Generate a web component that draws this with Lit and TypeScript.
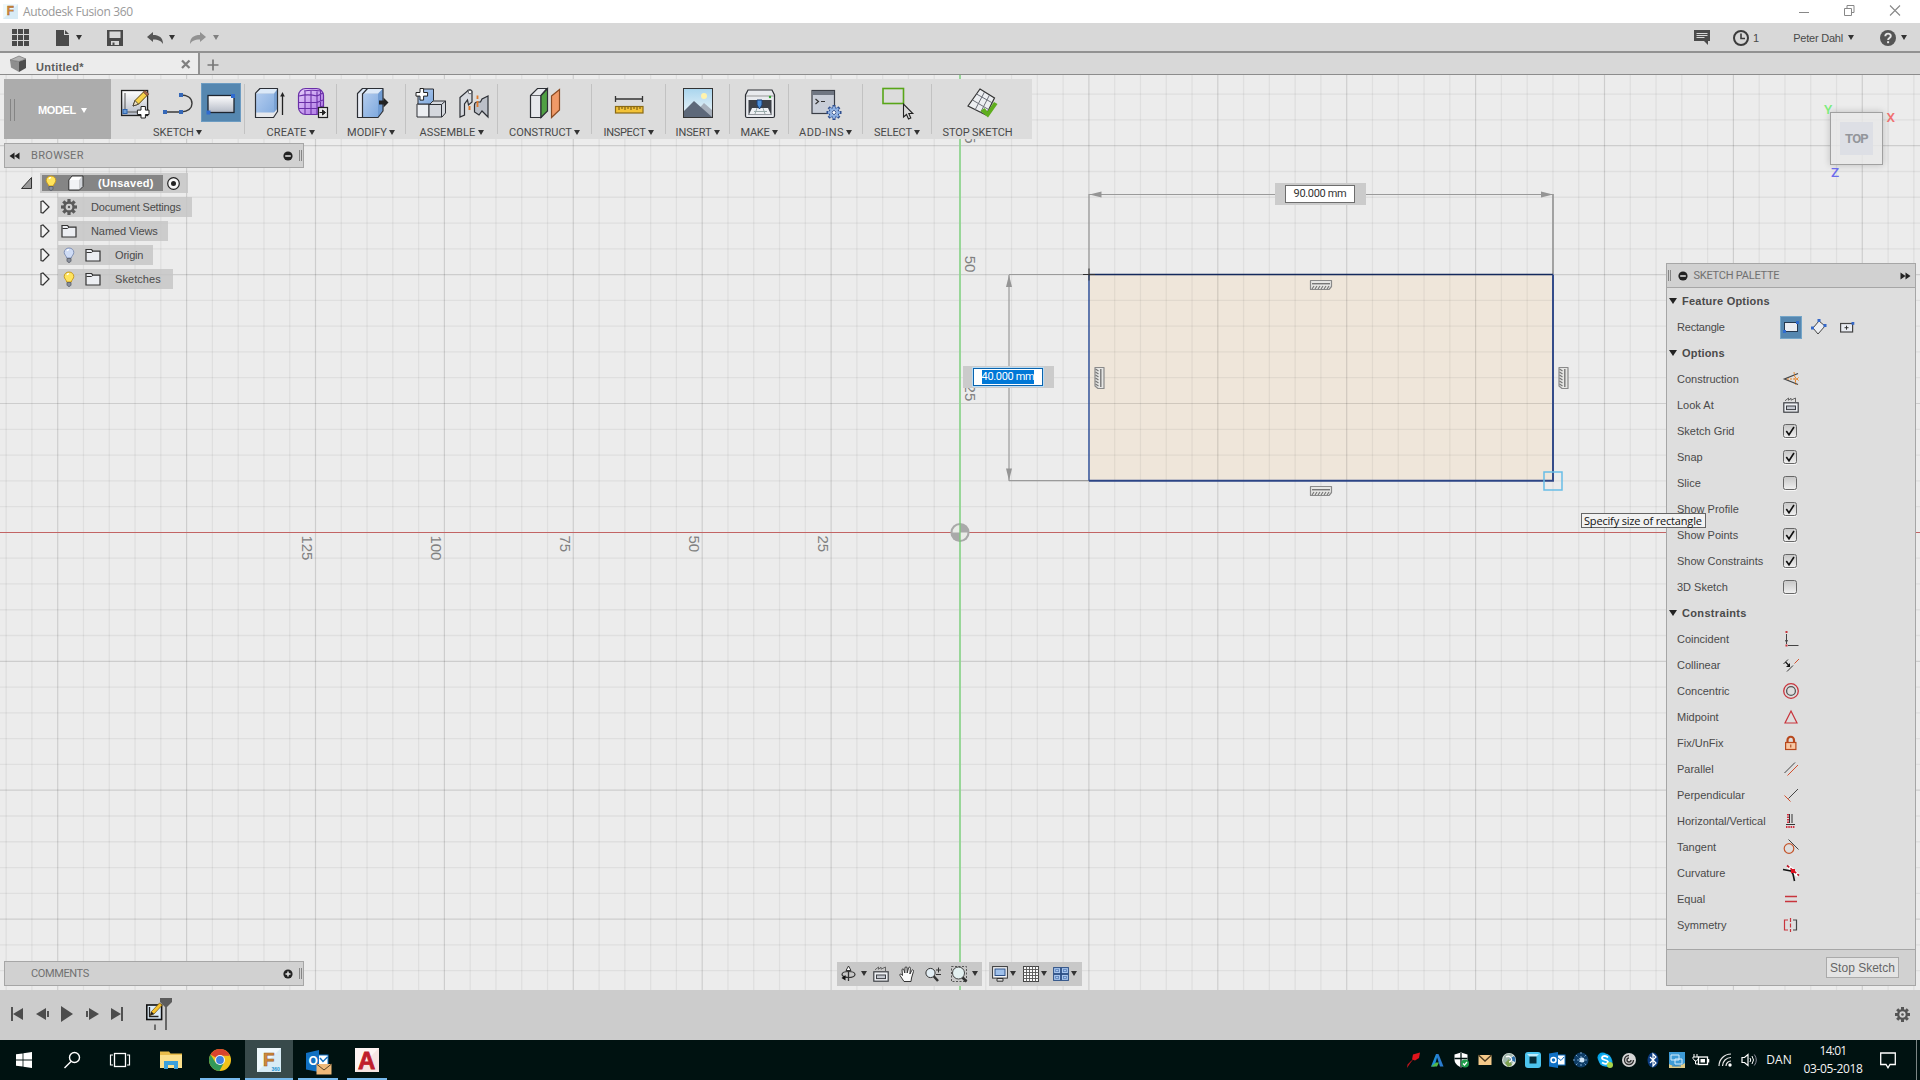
import { LitElement, html, svg, css, nothing } from "lit";
import { customElement } from "lit/decorators.js";

const icon = (w: number, h: number, body: unknown, cls = "") =>
  html`<svg class=${cls} width=${w} height=${h} viewBox="0 0 ${w} ${h}">${body}</svg>`;

const caret = (cls = "") => html`<i class="caret ${cls}"></i>`;
const fit = (text: string, w: number, cls = "") => html`<span class="fit ${cls}" data-w=${w}>${text}</span>`;

/* ---------- shared glyphs ---------- */
const K = "#3c3f44";
const gears = (cx: number, cy: number, r: number, fill: string, hole: string) => svg`
  <circle cx=${cx} cy=${cy} r=${r * 0.72} fill=${fill}></circle>
  ${[0, 45, 90, 135].map((a) => svg`<rect x=${cx - r * 0.2} y=${cy - r} width=${r * 0.4} height=${r * 2} fill=${fill} transform="rotate(${a} ${cx} ${cy})"></rect>`)}
  <circle cx=${cx} cy=${cy} r=${r * 0.42} fill=${hole}></circle>`;

const bulb = (on: boolean) => icon(12, 16, svg`
  <path d="M6 1C3.2 1 1.2 3 1.2 5.4 1.2 7.8 3.3 8.6 3.7 11h4.6c.4-2.4 2.5-3.2 2.5-5.6C10.8 3 8.8 1 6 1z"
    fill=${on ? "#ffe45c" : "#cfdcf5"} stroke=${on ? "#c79a22" : "#8191b5"}></path>
  <path d="M4 3.8C4.5 3 5.2 2.7 6 2.7" stroke="#fff" fill="none" stroke-width="1.3"/>
  <path d="M4 11.5h4v2.6l-1 1.2H5l-1-1.2z" fill="#8a909c" stroke="#555b66" stroke-width=".8"/>`);

const folder = icon(16, 14, svg`
  <path d="M1 3V1.5h5.5L8 3.2h7V13H1z" fill="#eceef2" stroke="#333" stroke-width="1.2"/>
  <path d="M1.5 4.5h5l1.5-1.3" stroke="#333" fill="none"/>`);

const lookAt = icon(16, 16, svg`
  <rect x=".8" y="5.8" width="14.4" height="9.4" fill="#eef0f4" stroke=${K} stroke-width="1.2"/>
  <rect x="3.5" y="9" width="9" height="3.6" fill="#c4c8d0" stroke="#3c3f44"/>
  <path d="M2 3.8L5.5 1v2.3L8 1.2v2L12.5 1v4" fill="none" stroke="#666"/>`);

const cube = icon(16, 16, svg`
  <path d="M4 1h11l-3.5 4H.8z" fill="#fff"/><path d="M15 1v10.5L11.5 15V5z" fill="#d0d3d8"/>
  <path d="M.8 5h10.7v10H.8z" fill="#f2f3f5"/>
  <path d="M4 1h11v10.5L11.5 15H.8V5z" fill="none" stroke="#333"/>`);

/* ---------- ribbon icons (32 x 32) ---------- */
const defs = svg`<defs>
  <linearGradient id="g" x1="0" y1="0" x2="0" y2="1"><stop offset="0" stop-color="#fff"/><stop offset="1" stop-color="#b4bac6"/></linearGradient>
  <linearGradient id="b" x1="0" y1="0" x2="1" y2="1"><stop offset="0" stop-color="#b4cdef"/><stop offset="1" stop-color="#7fa9de"/></linearGradient>
  <linearGradient id="p" x1="0" y1="0" x2="1" y2="1"><stop offset="0" stop-color="#e6cffb"/><stop offset="1" stop-color="#ab72e4"/></linearGradient>
  <linearGradient id="s" x1="0" y1="0" x2="0" y2="1"><stop offset="0" stop-color="#a9d5ee"/><stop offset="1" stop-color="#f2f8fa"/></linearGradient>
</defs>`;
const D = "#2c2f35";
const rib: Record<string, unknown> = {
  sketch: svg`<rect x="2.6" y="3.5" width="26" height="25" fill="url(#g)" stroke="#222" stroke-width="1.3"/>
    <path d="M6 6v19h17" stroke="#555" fill="none"/><rect x="4" y="22.5" width="4" height="4" fill="#6c9ed6" stroke="#2f65b0"/>
    <path d="M14 19l2-5.5L25.5 4l3.6 3.4-9.6 9.8z" fill="#f7d24a" stroke="#5a4310"/><path d="M14 19l2-5.5 3.5 3.7z" fill="#efe0c0" stroke="#333" stroke-width=".8"/><path d="M24.4 5.2L26 3.6l3.7 3.3-1.7 1.8z" fill="#b06a52" stroke="#5a3a20" stroke-width=".7"/>
    <path d="M22 19.5h4.4v3.6H30v4.4h-3.6V31H22v-3.5h-3.6v-4.4H22z" fill="#fff" stroke="#222"/>`,
  line: svg`<path d="M3 25h16M19 8c5 0 11 2 11 8.5S24 24.5 19 25" fill="none" stroke="#3a3a3a" stroke-width="1.4"/>
    <rect x="1" y="23" width="4" height="4" fill="#3568b8"/><rect x="17" y="23" width="4" height="4" fill="#3568b8"/><rect x="17" y="6" width="4" height="4" fill="#3568b8"/>`,
  rect: svg`<rect x="3" y="8.5" width="26" height="17" fill="url(#g)" stroke="#1d2530" stroke-width="1.3"/>
    <rect x="26" y="7" width="4" height="4" fill="#2f6bd0"/><rect x="1.5" y="23.5" width="4" height="4" fill="#2f6bd0"/>`,
  extrude: svg`<path d="M6 1.5h18l-4 5H2z" fill="#dce9f8"/><path d="M24 1.5v23l-4 6v-24z" fill="#7aa2d4"/><path d="M1.5 6.5h18.5v24H1.5z" fill="url(#b)"/>
    <path d="M1.5 25.5h18.5l4-4.5v4l-4 6H1.5z" fill="#e6e8ec"/>
    <path d="M6 1.5h17.5V24.5l-4 6h-18V6.2z" fill="none" stroke=${D} stroke-width="1.2" stroke-linejoin="round"/>
    <path d="M28.5 28V8" stroke="#222" stroke-width="1.3"/><path d="M28.5 5l2.3 4.5h-4.6z" fill="#222"/>`,
  form: svg`<rect x="1.5" y="1.5" width="25" height="26" rx="7" fill="url(#p)" stroke="#6a2fa8" stroke-width="1.2"/>
    <path d="M2 9c6-1.5 12-1.5 18 0M2 15.5h18M2 21.5h18M8 3.5V27M14 3.5V27M20 3v24M23.5 3v22M20 9l6-3M20 15.5l6-2.5M20 21.5l6-2.5M7 4c5-1 11-1 17 0" fill="none" stroke="#6a2fa8" stroke-width="1.1"/>
    <rect x="21.5" y="20.5" width="9" height="10" fill="#e8e8e8" stroke="#222" stroke-width="1.2"/><path d="M22.5 25.5h4M25.5 23l3 2.5-3 2.5z" stroke="#222" fill="#222"/>`,
  modify: svg`<path d="M7 1.5h20l-4 5H2z" fill="#dce9f8"/><path d="M27 1.5v22l-5 7v-24z" fill="#6f9bd2"/><path d="M1.5 6.5h5v24h-5z" fill="#e9edf4"/><path d="M6.5 6.5H22v24H6.5z" fill="url(#b)"/>
    <path d="M6.5 1.5H27V24l-5 6.5H1.5V6.5zM6.5 30V7l5-5.5" fill="none" stroke=${D} stroke-width="1.2" stroke-linejoin="round"/>
    <path d="M23 13.5h4.5v-3l5 5-5 5v-3H23z" fill="#222"/>`,
  component: svg`<path d="M2 17h12v13H2z" fill="#eceef2" stroke="#2c2f35"/><path d="M14 17l3-3h13.5v12L27 30H14z" fill="#d4d7dd" stroke="#2c2f35"/><path d="M14 17.5h12.5V30M26.5 17.5l4-3.5" stroke="#2c2f35" fill="none"/>
    <path d="M3 8l5-6h10.5v11.5L15 17H3z" fill="url(#b)" stroke="#2c2f35"/>
    <path d="M5 1.5h3.6v4h4v3.6h-4v4H5v-4H1V5.5h4z" fill="#fff" stroke="#222"/>`,
  joint: svg`<path d="M2 10.5l7-6c1-2.5 6-2.5 5 1.5v9l-3.5 3-1-5L6.5 17v11L2 30z" fill="#d6d9df" stroke="#2c2f35" stroke-width="1.2"/><circle cx="12" cy="5" r="1.8" fill="#fff" stroke="#2c2f35" stroke-width=".7"/><path d="M11.5 19v4" stroke="#e07a2c" stroke-width="2"/>
    <path d="M30 9l-6 3-1.5 3h-3c-2 0-3 1.5-3 3v7l4.5 3 3-4 6 6z" fill="#bcc0c8" stroke="#2c2f35" stroke-width="1.2"/><path d="M19.5 12V8.5M19.5 20v-6" stroke="#e07a2c" stroke-width="1.8"/>`,
  plane: svg`<path d="M1.5 8.5l7-7h9.5l-6 7v22H1.5z" fill="#e6e8ec" stroke="#2c2f35" stroke-width="1.2"/><path d="M2 8.5h10" stroke="#2c2f35" stroke-width=".7"/><path d="M12 8.5l6.5-7v22.5L12 30.5z" fill="#4fa043" stroke="#2c2f35" stroke-width="1.2"/>
    <path d="M22.5 9l8-6.5V23l-8 7.5z" fill="#f09a68" stroke="#8a4a22" stroke-width="1.2"/>`,
  inspect: svg`<path d="M2.5 12h27M2.5 9v6M29.5 9v6" stroke="#333" stroke-width="1.3" fill="none"/><rect x="2.5" y="19.5" width="27.5" height="6.5" fill="#f3c338" stroke="#8a6a14" stroke-width="1.2"/>
    <path d="M6 20v3M9 20v2M12 20v3M15 20v2M18 20v3M21 20v2M24 20v3M27 20v2" stroke="#6b5010"/>`,
  insert: svg`<rect x="1.5" y="1.5" width="29" height="29" fill="url(#s)" stroke="#333"/><circle cx="22" cy="9" r="3" fill="#fff3ad"/>
    <path d="M14 25l8-9 8 7v7H14z" fill="#a7b0bc"/><path d="M2 24l10-10 18 16H2z" fill="#5d6879"/>`,
  make: svg`<path d="M4 3h24l2.5 5v21a1.5 1.5 0 0 1-1.5 1.5H3A1.5 1.5 0 0 1 1.5 29V8z" fill="#e8eaee" stroke="#2c2f35" stroke-width="1.2"/><path d="M2 9h28" stroke="#999"/>
    <path d="M4.5 13h23v15h-23z" fill="#3d4148"/><path d="M8 21h16l3 6.5H5z" fill="#eef0f3"/><path d="M10 24.5h13M13 21l-2 6M19 21l2 6" stroke="#9aa"/><path d="M13 13h5v5l-2.5 4L13 18z" fill="#4d8fd8" stroke="#1e3f70"/><circle cx="26" cy="10" r="1.2" fill="#2ea52e"/>`,
  addins: svg`<rect x="2" y="3.5" width="22.5" height="23" fill="#c9ced8" stroke="#3a3e46" stroke-width="1.2"/><rect x="2.5" y="4" width="21.5" height="4" fill="#6f7682"/>
    <path d="M5.5 12l3 2.5-3 2.5M11 14.5h4" stroke="#333" fill="none" stroke-width="1.2"/>
    ${gears(24, 25.5, 7.5, "#2f4f8f", "#fff")}${gears(24, 25.5, 6, "#8fb2e4", "#fff")}<circle cx="24" cy="25.5" r="2" fill="#fff" stroke="#2f4f8f"/>`,
  select: svg`<rect x="1" y="1.5" width="20.5" height="15" fill="none" stroke="#58a618" stroke-width="1.6"/>
    <path d="M21.500 17v13l3-2.5 2 4.5 2.3-1-2-4.5h4z" fill="#d9d9d9" stroke="#222" stroke-width="1.1"/>`,
  stop: svg`<path d="M14 2l14.5 9-8.5 17L2 19z" fill="#eceef1" stroke="#333" stroke-width="1.2"/><path d="M10.5 7l16 9M6.5 13l16 9.5M18.5 5l-9.5 18M23.5 8l-9 17.5" stroke="#6b6f78" fill="none"/>
    <path d="M14.5 24l4-3 3 3.5 6.5-9.5 3.5 2-9.5 13.5z" fill="#5fae1e"/>`,
};

const GROUPS: Array<[string, number, number, string[], string?]> = [
  ["SKETCH", 134, 40, ["sketch", "line", "rect"], "rect"],
  ["CREATE", 92, 39, ["extrude", "form"]],
  ["MODIFY", 69, 39, ["modify"]],
  ["ASSEMBLE", 92, 55, ["component", "joint"]],
  ["CONSTRUCT", 94, 62, ["plane"]],
  ["INSPECT", 74, 41, ["inspect"]],
  ["INSERT", 64, 35, ["insert"]],
  ["MAKE", 59, 28, ["make"]],
  ["ADD-INS", 74, 44, ["addins"]],
  ["SELECT", 69, 37, ["select"]],
  ["STOP SKETCH", 100, 69, ["stop"]],
];

/* ---------- palette icons (16 x 16) ---------- */
const R = "#c8343c";
const pal: Record<string, unknown> = {
  Construction: svg`<path d="M15 2.5L1.5 8 15 13.5" fill="none" stroke="#444" stroke-width="1.3"/><path d="M4 8h12M11 1l2 13M12 6l4 4M12 10l4-4" stroke="#e8862a" stroke-dasharray="2 1" fill="none"/>`,
  Coincident: svg`<path d="M3.5 3v10M5 14.5h10.5" stroke="#444" fill="none"/><path d="M2 9h3l-1.5 3.5z" fill="#444"/><rect x="2.5" y="0" width="2" height="2" fill="#c8343c"/><rect x="2.5" y="13.5" width="2" height="2" fill="#c8343c"/>`,
  Collinear: svg`<path d="M.5 7L5 2.5M4 14.5l6-6" stroke="#333" fill="none"/><path d="M11.5 6.5l4.5-4.5" stroke="#d4502c"/><path d="M2.5 5l3 3" stroke="#111" stroke-width="1.2"/><path d="M7 6v4H3z" fill="#111"/>`,
  Concentric: svg`<circle cx="8" cy="8" r="7.3" fill="none" stroke=${R} stroke-width="1.3"/><circle cx="8" cy="8" r="4.4" fill="none" stroke="#555" stroke-width="1.3"/>`,
  Midpoint: svg`<path d="M8 2l6 12H2z" fill="none" stroke=${R} stroke-width="1.2"/>`,
  "Fix/UnFix": svg`<path d="M4.5 8V5a3.2 3.2 0 0 1 6.5 0v3" fill="none" stroke="#b8481c" stroke-width="2.2"/><rect x="2.6" y="7.5" width="10.3" height="7" fill="#f8c8a4" stroke="#b8481c" stroke-width="1.2"/><path d="M7.8 9.5v3" stroke="#a03c14"/>`,
  Parallel: svg`<path d="M1.5 12L12 1.5" stroke="#444"/><path d="M4.5 14.5L15 4" stroke="#d4502c"/>`,
  Perpendicular: svg`<path d="M5.5 11.5L15 2" stroke="#444"/><path d="M1.5 8.5l6 6" stroke="#d4502c"/>`,
  "Horizontal/Vertical": svg`<path d="M6.500 1v9M9 1v9M3 11.500h9" stroke="#333" fill="none"/><path d="M5 1v9" stroke="#d03040" fill="none" stroke-width="2" stroke-dasharray="1.500 1"/><path d="M3 14h9" stroke="#d03040" fill="none" stroke-width="2" stroke-dasharray="1.500 .8"/>`,
  Tangent: svg`<circle cx="6" cy="9.5" r="4.8" fill="none" stroke="#c4562c" stroke-width="1.2"/><path d="M5.5 .5l10 10" stroke="#444"/>`,
  Curvature: svg`<path d="M5 1.500l5 4M11 7l4.500 3.500" stroke="#fff" stroke-width="4" fill="none"/><path d="M4 .5l12 10" stroke="#c01828" stroke-width="1.7" stroke-dasharray="3 1.5"/><path d="M0 4.500l8 1.500 2 3 1.500 7" stroke="#111" fill="none" stroke-width="1.600"/><rect x="8" y="4" width="4" height="4" fill="#e01020"/>`,
  Equal: svg`<path d="M2 5.5h12M2 10.5h12" stroke=${R} stroke-width="1.3"/>`,
  Symmetry: svg`<path d="M5 3H1.5v10H5" fill="none" stroke=${R} stroke-width="1.2"/><path d="M10 3h3.5v10H10" fill="none" stroke="#444" stroke-width="1.2"/><path d="M7.5 1v14" stroke="#c8343c" stroke-dasharray="4 1.5" stroke-width="1.2"/>`,
};
const OPTIONS: Array<[string, boolean | null]> = [
  ["Construction", null], ["Look At", null], ["Sketch Grid", true], ["Snap", true], ["Slice", false],
  ["Show Profile", true], ["Show Points", true], ["Show Constraints", true], ["3D Sketch", false],
];
const CONSTRAINTS = ["Coincident", "Collinear", "Concentric", "Midpoint", "Fix/UnFix", "Parallel", "Perpendicular",
  "Horizontal/Vertical", "Tangent", "Curvature", "Equal", "Symmetry"];

const toggle = (sign: string) => icon(10, 10, svg`<circle cx="5" cy="5" r="4.6" fill="#222"/><path d=${sign === "+" ? "M2.5 5h5M5 2.5v5" : "M2.2 5h5.6"} stroke="#e4e4e4" stroke-width="1.5"/>`);
const chevrons = (d: string) => icon(11, 8, svg`<path d=${d === "l" ? "M5.5 .5v7L.5 4zM10.5 .5v7L5.5 4z" : "M.5 .5v7L5.5 4zM5.5 .5v7L10.5 4z"} fill="#222"/>`);

/* ---------- drawing canvas ---------- */
const OX = 960, OY = 532.4, STEP = 25.78;
const L = 1089, T = 274.5, RT = 1553, B = 480.8;

const gridLines = () => {
  const out: unknown[] = [];
  for (let i = -37; i <= 37; i++) {
    if (!i) continue;
    const x = OX + i * STEP;
    out.push(svg`<path d="M${x} 75V990" class=${i % 5 ? "minor" : "major"}></path>`);
  }
  for (let i = -17; i <= 17; i++) {
    if (!i) continue;
    const y = OY + i * STEP;
    out.push(svg`<path d="M0 ${y}H1920" class=${i % 5 ? "minor" : "major"}></path>`);
  }
  return out;
};
const hv = (x: number, y: number, rot = 0) => svg`<g transform="translate(${x} ${y}) rotate(${rot})">
  <path d="M-10.5-4.5h21v6l-2.5 3h-18.5z" fill="#e6e6e4" stroke="#8a8a8a" stroke-width="1.2" stroke-linejoin="round"/>
  <path d="M-9-1.3h18" stroke="#777" stroke-width="1.4"/>
  <path d="M-7 1l-2 3M-4 1l-2 3M-1 1l-2 3M2 1l-2 3M5 1l-2 3M8 1l-2 3" stroke="#777" stroke-width="1.2"/></g>`;

const canvas = () => html`<svg class="canvas" width="1920" height="915" viewBox="0 75 1920 915">
  <rect x=${L} y=${T} width=${RT - L} height=${B - T} fill="#efe6da"></rect>
  ${gridLines()}
  <path d="M0 532.5H1920" stroke="#c26464" stroke-width="1.1"/>
  <path d="M960 75V990" stroke="#8fd48f" stroke-width="1.8"/>
  ${[["25", 1], ["50", 2], ["75", 3], ["100", 4], ["125", 5]].map(([t, n]) => svg`
    <text class="scale" transform="translate(${OX - Number(n) * 5 * STEP - 13.5} 535.4) rotate(90)">${t}</text>`)}
  ${[["25", 1], ["50", 2], ["75", 3]].map(([t, n]) => svg`
    <text class="scale" text-anchor="end" transform="translate(965 ${OY - Number(n) * 5 * STEP - 2.2}) rotate(90)">${t}</text>`)}
  <circle cx="960" cy="532.5" r="9.6" fill="#a9a9a9"/>
  <path d="M960 532.5V525a7.5 7.5 0 0 0-7.5 7.5zM960 532.5V540a7.5 7.5 0 0 0 7.5-7.5z" fill="#e9ebe7"/>
  <path d="M960 523V542" stroke="#7cc87c" stroke-width="1.4"/>
  <g stroke="#9a9a9a" fill="none" stroke-width="1.2">
    <path d="M1089 194.5H1553M1089 194V274M1009 274.5H1089M1009 275V481M1009 480.7H1089"/><path d="M1553 194V274" stroke-width="1.8"/></g>
  <path d="M1089.5 194.5l12-3v6zM1553 194.5l-12-3v6zM1009 275l-3 12h6zM1009 480.5l-3-12h6z" fill="#959595"/>
  <path d="M${L} ${T}V${B}" stroke="#2c4f9c" stroke-width="1.4"></path>
  <path d="M${L} ${T}H${RT}" stroke="#14295c" stroke-width="1.4"></path>
  <path d="M${L} ${B}H${RT}V${T}" stroke="#2c4586" stroke-width="1.9" fill="none"></path>
  <path d="M1083 274.5h12M1089 268.5v12" stroke="#333"/>
  ${hv(1321, 285)}${hv(1321, 491)}${hv(1099.5, 378, 90)}${hv(1563.5, 378, 90)}
  <rect x="1544" y="472" width="18" height="18" fill="none" stroke="#68bde6" stroke-width="1.5"/>
</svg>`;

/* ---------- taskbar ---------- */
const tray: unknown[] = [
  svg`<path d="M8 2.500L15 .5 14 6l-4 2.500-3-1z" fill="#e0141c"/><path d="M8.500 7L5 11.500 2 16l.5-3.500L6 9z" fill="#c4141c"/>`,
  svg`<path d="M2 14.500L7 2h2L5.500 14.500z" fill="#1e8ed8"/><path d="M2 14.500l5-4h3l-2 4z" fill="#54b848"/><path d="M7 2h2.500l5 12.500h-3.500z" fill="#2a7cd0"/>`,
  svg`<path d="M8 .5l6.500 2v5c0 4-3 6-6.500 8-3.500-2-6.500-4-6.500-8v-5z" fill="#fff"/><path d="M8 1v14M1.500 6.500h13" stroke="#001312" stroke-width="1.3"/><circle cx="12" cy="11.5" r="4" fill="#1f9b4a"/><path d="M10 11.5l1.500 1.500 2.500-3" stroke="#fff" fill="none" stroke-width="1.2"/>`,
  svg`<rect x="1.5" y="3" width="13" height="10" fill="#f4c98a"/><path d="M1.500 3L8 9l6.500-6" fill="none" stroke="#4b3a20" stroke-width="1.3"/>`,
  svg`<circle cx="8" cy="8" r="7" fill="#dfe7e2"/><path d="M3 4a6 6 0 0 1 9-1l-4 4 4 3-2 4A7 7 0 0 1 2 9z" fill="#9fb6ac"/><path d="M8 7l5-3a6 6 0 0 1 1 6z" fill="#2d6fa8"/><path d="M4 11l4-4 3 6-4 2z" fill="#7da14f"/><path d="M5 5q3-2 5 1t-2 4" stroke="#fff" fill="none" stroke-width="1.3"/>`,
  svg`<rect width="16" height="16" rx="3" fill="#4cc4ee"/><path d="M2 2h12l-3 3H5z" fill="#c0ecfa"/><rect x="4.500" y="4.500" width="7" height="7" fill="#052c38"/>`,
  svg`<rect x="6" y="3" width="10" height="10" fill="#fff" stroke="#1070c4"/><path d="M8 5l4 3.500L15 5" stroke="#1070c4" fill="none"/><path d="M0 1.500L9 0v16L0 14.500z" fill="#1070c4"/><circle cx="4.500" cy="8" r="2.500" fill="none" stroke="#fff" stroke-width="1.500"/>`,
  svg`<circle cx="8" cy="8" r="7.5" fill="#0e3d66"/><path d="M0 8h16M8 0v16M3 3l10 10M3 13L13 3" stroke="#7aa6cc" stroke-dasharray="2 2"/><circle cx="9" cy="8" r="2.5" fill="#cfe6f8"/>`,
  svg`<circle cx="5.500" cy="5.500" r="5" fill="#00a3e8"/><circle cx="10.500" cy="10" r="5" fill="#00a3e8"/><circle cx="8" cy="8" r="6.500" fill="#18aef0"/><path d="M11 5.500C8.500 3 5 4 5 6c0 2.500 6 1.500 6 4 0 2-3.500 2.500-6 .5" fill="none" stroke="#fff" stroke-width="1.800"/><circle cx="13" cy="13" r="3" fill="#a6d44c"/>`,
  svg`<circle cx="8" cy="8" r="7" fill="#d6d6d6"/><path d="M8 3.500a4.500 4.500 0 1 0 4.500 4.500M8 6a2 2 0 1 0 2 2" stroke="#333" fill="none" stroke-width="1.400"/>`,
  svg`<ellipse cx="8" cy="8" rx="5.500" ry="7.500" fill="#0c3c80"/><path d="M5 5l6 6-3 3V2l3 3-6 6" fill="none" stroke="#fff" stroke-width="1.200"/>`,
  svg`<rect width="16" height="16" fill="#3e9bd6"/><path d="M2 3h8v5H2zM6 7h7v5H6z" fill="none" stroke="#d5ecfa"/><path d="M0 12c5 3 10 3 16-1v5H0z" fill="#e0ca86"/><path d="M3 14h9" stroke="#3a80b0"/>`,
  svg`<rect x="5.500" y="5" width="9" height="7.500" fill="none" stroke="#fff" stroke-width="1.300"/><path d="M15.500 7v3.500" stroke="#fff" stroke-width="1.500"/><path d="M7.500 7h4.500v3.500H7.500z" fill="#fff"/><path d="M1 2v3M4 2v3M0 5h5.500v1.500L3.500 9H2L0 6.500zM2.500 9v3h3" stroke="#fff" fill="none"/>`,
  svg`<path d="M2 14A12 12 0 0 1 14 2M5.500 14A8.500 8.500 0 0 1 14 5.500M9 14a5 5 0 0 1 5-5" fill="none" stroke="#e8e8e8" stroke-width="1.200"/><circle cx="13" cy="13" r="1.700" fill="#fff"/>`,
  svg`<path d="M1 5.500h2.500L7 2.500v11L3.500 10.500H1z" fill="none" stroke="#fff" stroke-width="1.200"/><path d="M9 6q1.500 2 0 4M11 4q3 4 0 8" fill="none" stroke="#fff"/><path d="M13.300 2.500q4 5.500 0 11" fill="none" stroke="#889"/>`,
];

const fusionLogo = (s: number) => html`<svg width=${s} height=${s} viewBox="0 0 24 24"><rect width="24" height="24" fill="#d8ecf6"/>
  <path d="M0 0h24L0 24z" fill="#eef8fc"/><text x="6" y="18" class="logoF">F</text>
  ${s > 20 ? svg`<text x="14.5" y="22.8" class="logo360">360</text>` : nothing}</svg>`;

const tasks: unknown[] = [
  icon(16, 16, svg`<path d="M0 2.3L6.6 1.4v6.2H0zM7.4 1.3L16 0v7.6H7.4zM0 8.4h6.6v6.2L0 13.7zM7.4 8.4H16V16l-8.6-1.3z" fill="#fff"/>`),
  icon(18, 18, svg`<circle cx="11.5" cy="6.5" r="5" fill="none" stroke="#fff" stroke-width="1.4"/><path d="M8 10.5L1.500 17" stroke="#fff" stroke-width="1.5"/>`),
  icon(22, 16, svg`<rect x="5.5" y="1.5" width="11" height="13" fill="none" stroke="#fff" stroke-width="1.3"/><path d="M4 3H1.5v10H4M18 3h2.5v10H18" fill="none" stroke="#fff" stroke-width="1.2"/>`),
];
const apps: Array<[string, unknown]> = [
  ["t-folder", icon(22, 20, svg`<path d="M0 1.5h9l1.5 2H22V18H0z" fill="#e9bd4b"/><path d="M0 5h22v13H0z" fill="#fbe08c"/><path d="M4 19v-8h14v8h-4v-4H8v4z" fill="#3aa0dc"/>`)],
  ["t-chrome on", icon(22, 22, svg`<circle cx="11" cy="11" r="11" fill="#f2c21a"/><path d="M11 11L1.500 5.500A11 11 0 0 1 20.500 5.500L11 6z" fill="#d9432f"/><path d="M1.500 5.500A11 11 0 0 0 10.500 22L15 13.500 6.500 13.500z" fill="#32995a"/><path d="M11 6h9.500" stroke="#d9432f" stroke-width="1.500"/><circle cx="11" cy="11" r="5" fill="#f3f3f3"/><circle cx="11" cy="11" r="3.900" fill="#3f80e0"/>`)],
  ["t-fusion on active", fusionLogo(24)],
  ["t-outlook on", icon(26, 26, svg`<rect x="12" y="5" width="10" height="11" fill="#fff" stroke="#1170c2"/><path d="M14 8l3 3.500L21.500 7" stroke="#1170c2" fill="none" stroke-width="1.500"/><path d="M0 3l13-3v22L0 19.500z" fill="#1170c2"/><text x="2.500" y="14.800" class="logoO">O</text><rect x="10.500" y="14" width="15" height="10.500" fill="#efb97a"/><path d="M10.500 14l7.500 6 7.500-6" fill="none" stroke="#5a4326"/>`)],
  ["t-acad on", icon(24, 24, svg`<rect width="24" height="24" fill="#f7e4e2"/><path d="M0 0h24L0 24z" fill="#fdf4f3"/><text x="3" y="20.500" class="logoA">A</text>`)],
];

@customElement("app-root")
export class AppRoot extends LitElement {
  static styles = css`
    :host { display: flex; flex-direction: column; width: 1920px; height: 1080px; overflow: hidden; background: #ececec; color: #4a4a4a;
      font: 11px/14px "Liberation Sans", Arial, sans-serif; cursor: default; }
    * { box-sizing: border-box; }
    svg { display: block; flex: none; overflow: visible; }
    .fit { display: inline-block; white-space: pre; flex: none; justify-self: start; }
    .caret { width: 0; height: 0; border: 3.5px solid transparent; border-top: 5px solid #333; border-bottom: 0; flex: none; }
    .caret.faded { border-top-color: #808080; }
    .segoe { font-family: "Open Sans", "Noto Sans", sans-serif; }

    .title { height: 23px; background: #fff; display: flex; align-items: center; padding-left: 3px; gap: 5px; color: #999; font-size: 12px; flex: none; }
    .wincontrols { margin-left: auto; display: flex; gap: 35px; padding: 0 20px 3px 0; }
    .appbar { height: 30px; background: #d8d8d8; border-bottom: 2px solid #929292; display: flex; align-items: center; padding: 1px 13px 0 12px; flex: none; }
    .apps { display: grid; grid-template-columns: repeat(3, 5px); grid-auto-rows: 5px; gap: 1px; width: 17px; flex: none; }
    .apps i { background: #4a4a4a; }
    .docicon { margin-left: 27px; }
    .disk { margin-left: 25px; }
    .goback { margin-left: 24px; } .gofwd { margin-left: 15px; }
    .appbar .caret { margin-left: 6.5px; }
    .appbar .right { margin-left: auto; display: flex; align-items: center; }
    .clock { margin: 0 4px 0 23px; } .user { margin-left: 35px; } .appbar .right .caret { margin-left: 5px; } .help { margin-left: 26px; }
    .tabs { height: 22px; background: #d8d8d8; border-bottom: 1px solid #8c8c8c; display: flex; flex: none; }
    .tab { width: 200px; background: #ececec; border-right: 2px solid #929292; display: flex; align-items: center; padding: 0 8px 0 10px; font-weight: bold; color: #5c5c5c; }
    .tab .fit { margin: 6px 0 0 10px; }
    .tab .x { margin-left: auto; } .plus { margin: 6px 0 0 7px; }

    .work { position: relative; height: 915px; flex: none; display: flex; flex-direction: column; overflow: hidden; }
    .canvas { position: absolute; inset: 0; }
    .minor { stroke: #000; stroke-opacity: .055; stroke-width: 1.3; } .major { stroke: #000; stroke-opacity: .13; stroke-width: 1.2; }
    .scale { font: 15px "Liberation Sans", sans-serif; fill: #808080; }

    .ribbon { position: relative; display: flex; width: 1028px; height: 60px; margin: 4px 0 0 4px; background: #dcdcdc; flex: none; }
    .model { width: 107px; background: #acacac; color: #fff; font-weight: bold; display: flex; align-items: center; padding: 2px 0 0 6px; }
    .model .caret { border-top-color: #fff; margin-left: 5px; }
    .model .grip { height: 22px; margin-right: 23px; }
    .grip { width: 5px; height: 11px; border: solid #858585; border-width: 0 1px; flex: none; }
    .group { position: relative; display: flex; flex-direction: column; align-items: center; padding-top: 4px; }
    .group + .group::before { content: ""; position: absolute; left: -1px; top: 5px; width: 1px; height: 50px; background: #c2c2c2; }
    .icons { display: flex; gap: 3px; height: 39px; }
    .tool { width: 40px; height: 39px; display: flex; align-items: center; justify-content: center; }
    .tool.sel { background: #5587b0; outline: 1px solid #6d9cc2; outline-offset: -1px; }
    .caption { display: flex; align-items: center; gap: 2.5px; margin: 3.5px 0.5px 0 0; font-family: Roboto, "Liberation Sans", sans-serif; color: #484848; }
    .caption.bare { margin-right: 9px; }

    .panel { position: relative; width: 300px; height: 25px; margin-left: 4px; border: 1px solid #a6a6a6; background: #d1d1d1; display: flex; align-items: center; padding: 0 1px 0 4px; color: #707070; flex: none; }
    .panel .fit { font-family: Roboto, "Liberation Sans", sans-serif; }
    .panel .name { margin-left: 11px; } .panel .only { margin-left: 22px; }
    .panel .end { margin-left: auto; display: flex; gap: 6px; align-items: center; }
    .panel .grip { width: 3px; }
    .tree { position: relative; display: flex; flex-direction: column; gap: 4px; padding: 5px 0 0 21px; }
    .row { display: flex; height: 20px; align-items: center; }
    .row > svg { width: 11px; margin-right: 8px; }
    .child { padding-left: 19px; } .child > svg { margin-right: 7px; }
    .chip { height: 20px; background: rgba(198,198,198,.86); display: flex; align-items: center; padding-left: 3px; }
    .chip .fit { margin-left: 14px; } .chip .b { width: 15px; display: flex; justify-content: center; margin-right: 9px; }
    .root { width: 148px; padding: 0 8px 0 2px; justify-content: space-between; }
    .dark { width: 121px; height: 16px; background: #858585; color: #fff; font-weight: bold; display: flex; align-items: center; padding-left: 3px; }
    .dark svg + svg { margin-left: 11px; } .dark .fit { margin-left: 14px; }

    .viewcube { position: absolute; left: 1830px; top: 37px; width: 53px; height: 53px; border: 1px solid #a0a0a0; background: rgba(232,232,232,.8); box-shadow: 0 0 7px rgba(0,0,0,.2); display: flex; align-items: center; justify-content: center; }
    .face { width: 33px; height: 33px; background: #dddfe5; display: flex; align-items: center; justify-content: center; color: #93969b; font: bold 13px Roboto, sans-serif; }
    .ax { position: absolute; font: 500 13.5px Roboto, sans-serif; }
    .axx { right: -13px; top: -4px; color: #f07070; } .axy { left: -7px; top: -12px; color: #7cec7c; } .axz { left: 0; top: 51px; color: #6c6cec; }

    .dim { position: absolute; width: 91px; height: 22px; background: #cbcbcb; display: flex; align-items: center; justify-content: center; }
    .dim div { width: 70px; height: 18px; background: #fff; border: 1px solid #6d6d6d; display: flex; align-items: center; justify-content: center; color: #333; margin-bottom: 1px; margin-right: 1px; font-family: Roboto, sans-serif; }
    .d90 { left: 1275px; top: 108px; } .d40 { left: 963px; top: 291px; }
    .dim .live { border-color: #0a63ad; box-shadow: 0 0 0 1px #b8dcf6; }
    .live .fit { background: #0078d7; color: #fff; }

    .foot { position: relative; margin-top: auto; display: flex; align-items: center; padding-bottom: 4px; }
    .nav { height: 24px; background: #c8c8c8; display: flex; align-items: center; padding: 0 4px 0 3px; }
    .nav1 { margin-left: 533px; width: 145px; } .nav2 { margin-left: 7px; width: 93px; }
    .nav .caret { border-width: 5px 3px 0; margin-left: 2px; } .nav .caret + svg { margin-left: 6.5px; } .nav svg + svg { margin-left: 10px; }
    .nav .wide { margin-left: 4.5px; }

    .palette { position: absolute; left: 1666px; top: 188px; width: 250px; height: 723px; border: 1px solid #a6a6a6; background: #dedede; display: flex; flex-direction: column; }
    .phead { height: 24px; border-bottom: 1px solid #a6a6a6; background: #d1d1d1; display: flex; align-items: center; padding: 0 4px 0 1px; color: #707070; font-family: Roboto, sans-serif; flex: none; }
    .phead .grip { width: 3px; margin-right: 7px; } .phead .fit { margin-left: 5.5px; } .phead svg:last-child { margin-left: auto; }
    .sect { height: 26px; display: flex; align-items: center; gap: 5px; padding-left: 2px; font-weight: bold; flex: none; }
    .sect .caret { border-width: 6px 4.5px 0; border-top-color: #222; }
    .opt { height: 26px; display: grid; grid-template-columns: 103px 1fr; align-items: center; padding-left: 10px; flex: none; }
    .opt > span { white-space: nowrap; }
    .opt .ico { padding-left: 3px; display: flex; }
    .modes { display: flex; gap: 6px; align-items: center; }
    .modes span { width: 22px; height: 23px; display: flex; align-items: center; justify-content: center; }
    .modes .sel { background: #5587b0; outline: 1px solid #74a5c8; outline-offset: -1px; }
    .check { width: 14px; height: 14px; border: 1px solid #666; border-radius: 2.5px; background: linear-gradient(#c8c8c8, #eee); box-shadow: 0 1px 0 #f6f6f6; }
    .pfoot { margin-top: auto; height: 36px; border-top: 1px solid #a6a6a6; background: #d1d1d1; display: flex; justify-content: flex-end; align-items: center; padding-right: 16px; }
    .stop { width: 73px; height: 21px; border: 1px solid #aaa; background: #e4e4e4; color: #666; font-size: 12px; display: flex; align-items: center; justify-content: center; }
    .tooltip { position: absolute; left: 1581px; top: 438px; width: 125px; height: 15px; border: 1px solid #666; background: #f2f2f2; color: #111; display: flex; align-items: center; padding-left: 2px; line-height: 13px; }

    .timeline { height: 50px; background: #ccc; display: flex; align-items: center; padding: 0 10px 2px 11px; flex: none; }
    .timeline svg + svg { margin-left: 12.5px; } .timeline svg.mark { margin-left: 23px; } .timeline svg.cog { margin-left: auto; }
    .task { height: 40px; background: #001211; display: flex; flex: none; color: #f4f4f4; }
    .slot { width: 48px; display: flex; align-items: center; justify-content: center; }
    .t { position: relative; display: flex; align-items: center; justify-content: center; width: 40px; }
    .t.on { box-shadow: inset 0 -2px #76b9ed; }
    .t-folder { margin-left: 7px; } .t-chrome { margin-left: 9px; } .t-fusion { margin-left: 5px; width: 48px; background: #384a4b; } .t-outlook { margin-left: 5px; padding: 5px 0 0 2px; } .t-acad { margin-left: 9px; }
    .tray { margin-left: auto; display: flex; align-items: center; }
    .tray .cell { width: 24px; display: flex; justify-content: center; }
    .lang { margin-left: 5px; font-size: 12px; }
    .when { width: 60px; margin: 0 17px 0 11px; display: flex; flex-direction: column; align-items: center; font-size: 12px; line-height: 18px; }
    .show { width: 1px; height: 40px; background: #7b8584; margin: 0 3px 0 20px; }
    .logoF { font: bold 19px "Liberation Sans", sans-serif; fill: #d08a3c; stroke: #9c5c1c; stroke-width: .6; }
    .logo360 { font: bold 5px "Liberation Sans", sans-serif; fill: #1b8fd0; }
    .logoO { font: bold 12px "Liberation Sans", sans-serif; fill: #fff; }
    .logoA { font: bold 24px "Liberation Sans", sans-serif; fill: #c01e2c; stroke: #c01e2c; stroke-width: .8; }
  `;

  /** Spreads each label's letters over its nominal width. */
  firstUpdated() {
    this.renderRoot.querySelectorAll<HTMLElement>(".fit").forEach((el) => {
      const n = (el.textContent || "").length;
      const gap = (Number(el.dataset.w) + 0.8 - el.getBoundingClientRect().width) / n;
      el.style.letterSpacing = `${gap.toFixed(3)}px`;
    });
  }

  private check(on: boolean) {
    return html`<div class="check">${on ? icon(12, 12, svg`<path d="M2.3 6l2.7 3.8L10 2" fill="none" stroke="#111" stroke-width="1.6"/>`) : nothing}</div>`;
  }

  private child(name: string, w: number, box: number, lead: unknown) {
    return html`<div class="row child">
      ${icon(11, 14, svg`<path d="M1 1.5l2-.5 6 6-6 6-2-.5z" fill="#f4f4f4" stroke="#333" stroke-width="1.2"/>`)}
      <div class="chip" style="width:${box}px">${lead}${fit(name, w)}</div></div>`;
  }

  render() {
    const tri = html`<i class="caret"></i>`;
    return html`
      <div class="title segoe">${fusionLogo(15)}${fit("Autodesk Fusion 360", 109)}
        <div class="wincontrols">
          ${icon(10, 11, svg`<path d="M0 7.5h10" stroke="#888"/>`)}
          ${icon(11, 11, svg`<path d="M.5 3.5h7v7h-7zM3 3.5V.5h7v7H7.5" fill="none" stroke="#888"/>`)}
          ${icon(10, 11, svg`<path d="M0 .5l10 10M10 .5l-10 10" stroke="#888" stroke-width="1.1"/>`)}
        </div></div>

      <div class="appbar">
        <div class="apps">${Array.from({ length: 9 }, () => html`<i></i>`)}</div>
        ${icon(13, 16, svg`<path d="M0 0h8v5h5v11H0z" fill="#4a4a4a"/><path d="M9 0l4 4H9z" fill="#4a4a4a"/>`, "docicon")}${caret()}
        ${icon(16, 16, svg`<path d="M0 0h16v16H0z" fill="#4a4a4a"/><path d="M2.5 1.500h11V8h-11zM4 11h8v4H4z" fill="#d8d8d8"/><path d="M5.500 12.500h2V15h-2z" fill="#4a4a4a"/>`, "disk")}
        ${icon(16, 12, svg`<path d="M0 5l6-5v3c6 0 10 2.5 10 9-2-3-4-4.5-10-4.5V10z" fill="#555"/>`, "goback")}${caret()}
        ${icon(16, 12, svg`<path d="M16 5l-6-5v3C4 3 0 5.500 0 12c2-3 4-4.500 10-4.500V10z" fill="#929292"/>`, "gofwd")}${caret("faded")}
        <div class="right">
          ${icon(16, 15, svg`<path d="M0 0h16v11h-2v4l-4-4H0z" fill="#4a4a4a"/><path d="M2.5 3.5h11M2.5 5.5h11M2.5 7.5h8" stroke="#d8d8d8"/>`)}
          ${icon(16, 16, svg`<circle cx="8" cy="8" r="7" fill="none" stroke="#3c3c3c" stroke-width="2"/><path d="M8 3.5V8.5h4" fill="none" stroke="#3c3c3c" stroke-width="1.6"/>`, "clock")}
          ${fit("1", 4.5)}
          ${fit("Peter Dahl", 49, "user")}${caret()}
          ${icon(16, 16, svg`<circle cx="8" cy="8" r="8" fill="#555"/><path d="M5.3 6.2C5.3 2.8 10.8 2.9 10.8 6c0 2-2.7 2-2.7 4" fill="none" stroke="#e6e6e6" stroke-width="1.9"/><rect x="7.1" y="11.2" width="2" height="2" fill="#e6e6e6"/>`, "help")}${caret()}
        </div>
      </div>

      <div class="tabs">
        <div class="tab">${icon(16, 16, svg`<path d="M0 4l9 1.5V16L1 11.5z" fill="#8e8e8e"/><path d="M9 5.5L16 3v9l-7 4z" fill="#4e4e4e"/><path d="M0 4l9-4 7 3-7 2.5z" fill="#b4b4b4" stroke="#666" stroke-width=".6"/>`)}
          ${fit("Untitled*", 47)}
          ${icon(9, 10, svg`<path d="M1 1.5l7.5 7.5M8.5 1.5L1 9" stroke="#808080" stroke-width="2.3"/>`, "x")}</div>
        ${icon(12, 12, svg`<path d="M6 .5v11M.5 6h11" stroke="#777" stroke-width="1.7"/>`, "plus")}
      </div>

      <div class="work">
        ${canvas()}
        <div class="ribbon">
          <div class="model"><i class="grip"></i>${fit("MODEL", 37)}${caret()}</div>
          ${GROUPS.map(([name, w, tw, list, sel]) => html`<div class="group" style="width:${w}px">
            <div class="icons">${list.map((k) => html`<div class="tool ${k === sel ? "sel" : ""}">${icon(32, 32, svg`${defs}${rib[k]}`)}</div>`)}</div>
            <div class="caption ${name === "STOP SKETCH" ? "bare" : ""}">${fit(name, tw)}${name === "STOP SKETCH" ? nothing : caret()}</div></div>`)}
        </div>

        <div class="panel" style="margin-top:4px">${chevrons("l")}${fit("BROWSER", 52, "name")}
          <div class="end">${toggle("-")}<i class="grip"></i></div></div>
        <div class="tree">
          <div class="row">${icon(11, 12, svg`<path d="M10.5 .5v11H.5z" fill="#999" stroke="#333"/>`)}
            <div class="chip root"><div class="dark">${bulb(true)}${cube}${fit("(Unsaved)", 55)}</div>
              ${icon(13, 13, svg`<circle cx="6.5" cy="6.5" r="5.8" fill="#f6f6f6" stroke="#222" stroke-width="1.2"/><circle cx="6.5" cy="6.5" r="2.5" fill="#222"/>`)}</div></div>
          ${this.child("Document Settings", 89, 134, icon(16, 16, svg`${gears(8, 8, 8, "#5a5a5a", "#cfcfcf")}<circle cx="8" cy="8" r="1.2" fill="#5a5a5a"/>`))}
          ${this.child("Named Views", 66, 110, folder)}
          ${this.child("Origin", 27.5, 95, html`<span class="b">${bulb(false)}</span>${folder}`)}
          ${this.child("Sketches", 45, 115, html`<span class="b">${bulb(true)}</span>${folder}`)}
        </div>

        <div class="viewcube"><div class="face">${fit("TOP", 22)}</div>
          <span class="ax axx">X</span><span class="ax axy">Y</span><span class="ax axz">Z</span></div>

        <div class="dim d90"><div>${fit("90.000 mm", 52)}</div></div>
        <div class="dim d40"><div class="live">${fit("40.000 mm", 52)}</div></div>

        <div class="palette">
          <div class="phead"><i class="grip"></i>${toggle("-")}${fit("SKETCH PALETTE", 85)}${chevrons("r")}</div>
          <div class="sect">${tri}${fit("Feature Options", 87)}</div>
          <div class="opt">${fit("Rectangle", 47)}<div class="modes">
            <span class="sel">${icon(16, 12, svg`<rect x="1.5" y="1.5" width="13" height="9" fill="#e9ecf2" stroke="#24384f"/><rect x="13" y="0" width="3" height="3" fill="#2f6bd0"/><rect y="9" width="3" height="3" fill="#2f6bd0"/>`)}</span>
            <span>${icon(16, 16, svg`<path d="M8 2l6 5-7 8-5-6z" fill="#eceef2" stroke="#444"/><rect x="6.5" y="0" width="3" height="3" fill="#3568c8"/><rect x="0" y="7.5" width="3" height="3" fill="#3568c8"/><rect x="12.5" y="5" width="3" height="3" fill="#3568c8"/>`)}</span>
            <span>${icon(14, 11, svg`<rect x=".6" y="1.5" width="12" height="8.5" fill="#e9ecf2" stroke="#444" stroke-width="1.2"/><path d="M4.5 5.7h4M6.5 3.7v4" stroke="#333"/><rect x="11.5" y="0" width="2.8" height="2.8" fill="#3568c8"/>`)}</span></div></div>
          <div class="sect">${tri}${fit("Options", 42)}</div>
          ${OPTIONS.map(([n, v]) => html`<div class="opt"><span>${n}</span><div class="ico">
            ${v === null ? (n === "Look At" ? lookAt : icon(16, 16, pal[n])) : this.check(v)}</div></div>`)}
          <div class="sect">${tri}${fit("Constraints", 64)}</div>
          ${CONSTRAINTS.map((n) => html`<div class="opt"><span>${n}</span><div class="ico">${icon(16, 16, pal[n])}</div></div>`)}
          <div class="pfoot"><div class="stop">${fit("Stop Sketch", 64)}</div></div>
        </div>
        <div class="tooltip segoe">${fit("Specify size of rectangle", 117)}</div>

        <div class="foot">
          <div class="panel">${fit("COMMENTS", 57, "only")}<div class="end">${toggle("+")}<i class="grip"></i></div></div>
          <div class="nav nav1">
            ${icon(16, 16, svg`<path d="M8.5 15V4" stroke="#333" stroke-width="1.3"/><path d="M8.5 0l2.5 4.5H6z" fill="#fff" stroke="#333"/><ellipse cx="8.5" cy="8.5" rx="6.5" ry="3" fill="none" stroke="#333" stroke-width="1.2"/><path d="M1.5 12l4-3v5.5z" fill="#111"/>`)}${caret("wide")}
            ${lookAt}
            ${icon(16, 16, svg`<path d="M5 15.5L1 9.5C0 8 2 7.5 3.5 9.5L3 4c0-1.5 1.7-1.5 2 0l.8 3L6 2c0-1.6 2-1.6 2 0l.2 5L9.5 2c.4-1.500 2.200-1 1.900.5L10.900 8l1.800-3.500c.8-1.300 2.200-.5 1.800.8L12.500 12l-.5 3.500z" fill="#fafafa" stroke="#333"/>`)}
            ${icon(16, 16, svg`<path d="M8 9.5l5 5.5" stroke="#333" stroke-width="2.5"/><circle cx="5.5" cy="7" r="4.6" fill="#e3eef4" stroke="#333"/><path d="M11 4h5M13.500 1.500v5M11 8.500h5" stroke="#333"/>`)}
            ${icon(16, 16, svg`<rect x=".5" y=".5" width="15" height="15" fill="none" stroke="#555" stroke-dasharray="2 1.5"/><path d="M10.5 10.5l5 5" stroke="#333" stroke-width="2.6"/><circle cx="7.5" cy="7" r="6" fill="#e3f0f0" stroke="#444"/>`)}${caret("wide")}
          </div>
          <div class="nav nav2">
            ${icon(16, 16, svg`<rect x=".6" y=".6" width="14.8" height="11.5" fill="#f2f3f5" stroke="#333"/><rect x="3" y="3" width="10" height="6.5" fill="#9fc0ea" stroke="#2f5288"/><path d="M5 12.5h6v2.7H5z" fill="#ddd" stroke="#333"/>`)}${caret()}
            ${icon(16, 16, svg`<rect x=".5" y=".5" width="15" height="15" fill="#fafafa" stroke="#444"/><path d="M3.5 0v16M6.5 0v16M9.5 0v16M12.5 0v16M0 3.5h16M0 6.5h16M0 9.5h16M0 12.5h16" stroke="#555" stroke-width=".9"/>`)}${caret()}
            ${icon(16, 14, svg`${[0.6, 8.4].map((x) => [0.6, 7.4].map((y) => svg`<rect x=${x} y=${y} width="7" height="6" fill="#a9c6ee" stroke="#2c4f86"/><rect x=${x + 2} y=${y + 2} width="3" height="2" fill="none" stroke="#5a80b8" stroke-width=".8"/>`))}`)}${caret()}
          </div>
        </div>
      </div>

      <div class="timeline">
        ${icon(12, 14, svg`<path d="M1 0v14" stroke="#444" stroke-width="1.8"/><path d="M12 1v12L2 7z" fill="#4c4c4c"/>`)}
        ${icon(13, 14, svg`<path d="M10 1v12L0 7z" fill="#4c4c4c"/><path d="M12 4v6" stroke="#444" stroke-width="1.8"/>`)}
        ${icon(12, 16, svg`<path d="M0 0v16l12-8z" fill="#4c4c4c"/>`)}
        ${icon(13, 14, svg`<path d="M3 1v12l10-6z" fill="#4c4c4c"/><path d="M1 4v6" stroke="#444" stroke-width="1.8"/>`)}
        ${icon(12, 14, svg`<path d="M11 0v14" stroke="#444" stroke-width="1.8"/><path d="M0 1v12l10-6z" fill="#4c4c4c"/>`)}
        ${icon(26, 32, svg`<rect x=".8" y="7" width="14.8" height="14.5" fill="#dcecf8" stroke="#111" stroke-width="1.6"/><path d="M3.5 9v9.5h9" fill="none" stroke="#222" stroke-width="1.3"/>
          <path d="M4 17.5l1.5-4 8-8.5 2.8 2-8.3 9z" fill="#f7c32e" stroke="#6a4c10" stroke-width=".7"/><path d="M4 17.5l1.5-4 2.5 2.5z" fill="#222"/>
          <path d="M9 26.5v5.5" stroke="#555" stroke-width="1.6"/><path d="M14 0h12v4l-5 5h-2l-5-5z" fill="#5c5c5c"/><path d="M20 6v26" stroke="#5c5c5c" stroke-width="1.8"/>`, "mark")}
        ${icon(15, 15, svg`${gears(7.5, 7.5, 7.5, "#555", "#d4d4d4")}<circle cx="7.5" cy="7.5" r="1.3" fill="#555"/>`, "cog")}
      </div>

      <div class="task">
        ${tasks.map((g) => html`<div class="slot">${g}</div>`)}
        ${apps.map(([c, g]) => html`<div class="t ${c}">${g}</div>`)}
        <div class="tray segoe">
          ${tray.map((g) => html`<div class="cell">${icon(16, 16, g)}</div>`)}
          ${fit("DAN", 25, "lang")}
          <div class="when">${fit("14:01", 26)}${fit("03-05-2018", 58)}</div>
          ${icon(16, 17, svg`<path d="M.7 1h14.6v11.5H10L8 15.8 6 12.5H.7z" fill="none" stroke="#fff" stroke-width="1.3"/>`)}
          <i class="show"></i>
        </div>
      </div>`;
  }
}
